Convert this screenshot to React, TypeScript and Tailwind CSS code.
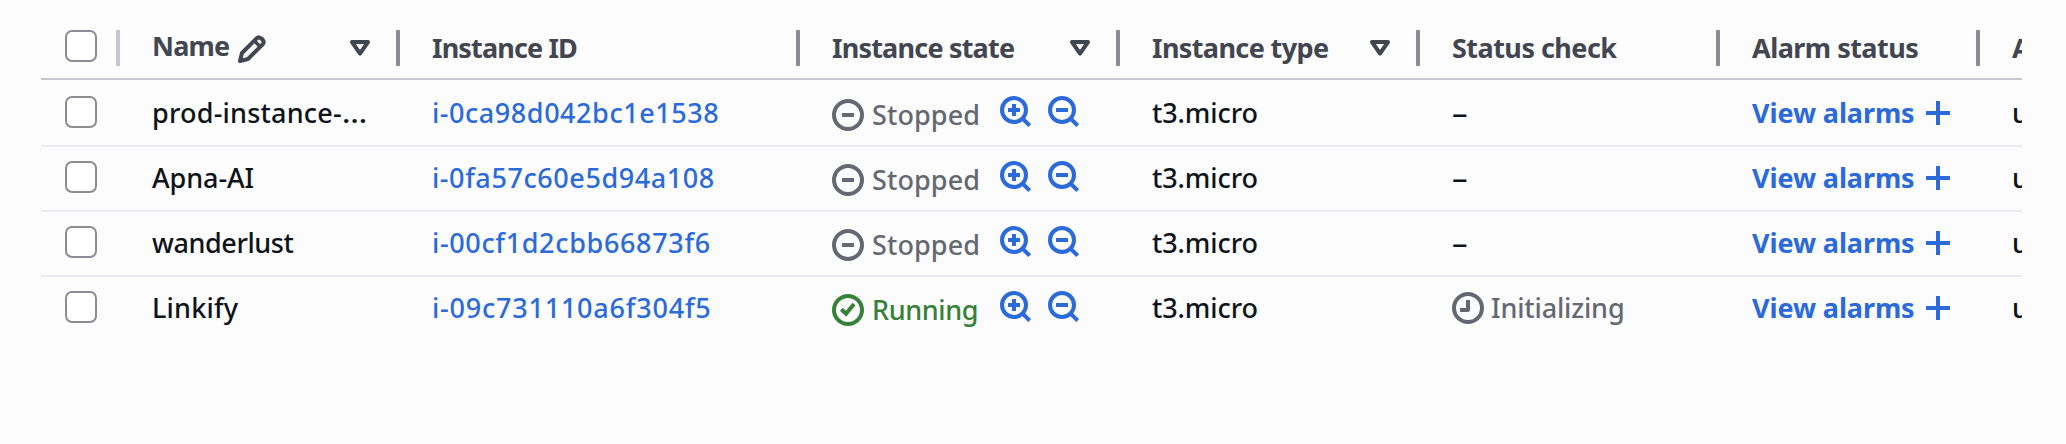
import type { ReactNode } from "react";

const GRID =
  "grid grid-cols-[79px_280px_400px_320px_300px_300px_260px_120px]";

function PencilIcon() {
  return (
    <svg className="mt-[3px] ml-[7px] h-8 w-8 shrink-0" viewBox="0 0 32 32" fill="none" stroke="#424650" strokeWidth="4" strokeLinejoin="round">
      <path d="M4 28 L6 20 L20.500 5.500 Q23 3 26 6 Q29 9 26.500 11.500 L12 26 Z" />
      <path d="M18.500 8 L24 13.500" strokeWidth="3.500" />
    </svg>
  );
}

function SortIcon() {
  return (
    <svg className="mt-8 h-8 w-8 shrink-0" viewBox="0 0 32 32" fill="none" stroke="#424650" strokeWidth="4" strokeLinejoin="round">
      <path d="M8 10 H24 L16 21.500 Z" />
    </svg>
  );
}

function StoppedIcon() {
  return (
    <svg className="h-8 w-8 shrink-0" viewBox="0 0 32 32" fill="none" stroke="currentColor" strokeWidth="4">
      <circle cx="16" cy="16" r="14" />
      <path d="M10 16 H22" />
    </svg>
  );
}

function RunningIcon() {
  return (
    <svg className="h-8 w-8 shrink-0" viewBox="0 0 32 32" fill="none" stroke="currentColor" strokeWidth="4">
      <circle cx="16" cy="16" r="14" />
      <path d="M9.300 15.300 L14 19.800 L22 10" />
    </svg>
  );
}

function PendingIcon() {
  return (
    <svg className="h-8 w-8 shrink-0" viewBox="0 0 32 32" fill="none" stroke="currentColor" strokeWidth="4" strokeLinejoin="round">
      <circle cx="16" cy="16" r="14" />
      <path d="M16 8 V18 H8" />
    </svg>
  );
}

function ZoomIcon({ plus }: { plus?: boolean }) {
  return (
    <svg className="h-8 w-8 shrink-0" viewBox="0 0 32 32" fill="none" stroke="#2b6adb" strokeWidth="4">
      <circle cx="14" cy="14" r="12" />
      <path d="M22.500 22.500 L29.700 29.700" />
      <path d={plus ? "M8 14 H20 M14 8 V20" : "M8 14 H20"} />
    </svg>
  );
}

function PlusIcon() {
  return (
    <svg className="mt-[15px] h-8 w-8 shrink-0" viewBox="0 0 32 32" fill="none" stroke="#2b6adb" strokeWidth="4">
      <path d="M4 16 H28 M16 4 V28" />
    </svg>
  );
}

function Checkbox() {
  return <span className="ml-6 block h-8 w-8 rounded-[7px] border-2 border-[#8c8c94] bg-white" />;
}

function HeaderCell({ children, sortable }: { children: ReactNode; sortable?: boolean }) {
  return (
    <div className="flex items-start pl-8">
      <div className="mt-[30px] flex flex-1 font-bold whitespace-nowrap text-[#424650]">{children}</div>
      {sortable && <SortIcon />}
      <span className={`mt-[30px] h-9 w-1 shrink-0 bg-[#8c8c94] ${sortable ? "ml-5" : ""}`} />
    </div>
  );
}

type Row = {
  name: ReactNode;
  id: ReactNode;
  running?: boolean;
};

const ROWS: Row[] = [
  {
    name: (
      <span className="tracking-[0.2px]">
        prod-instance-<span className="inline-block origin-left scale-x-115">…</span>
      </span>
    ),
    id: <span className="tracking-[0.55px]">i-0ca98d042bc1e1538</span>,
  },
  {
    name: <span className="tracking-[-0.1px]">Apna-AI</span>,
    id: <span className="tracking-[0.58px]">i-0fa57c60e5d94a108</span>,
  },
  {
    name: <span className="tracking-[-0.4px]">wanderlust</span>,
    id: <span className="tracking-[0.65px]">i-00cf1d2cbb66873f6</span>,
  },
  {
    name: <span className="tracking-[0.2px]">Linkify</span>,
    id: <span className="tracking-[0.78px]">i-09c731110a6f304f5</span>,
    running: true,
  },
];

function InstanceRow({ row, first, last }: { row: Row; first: boolean; last: boolean }) {
  return (
    <div
      className={`${GRID} ${first ? "h-[67px] pt-[2px]" : "h-[65px]"} ${last ? "" : "border-b-2 border-[#ebebf0]"} font-medium whitespace-nowrap text-[#0f141a]`}
    >
      <div className="pt-[14px]">
        <Checkbox />
      </div>
      <div className="pt-[13px] pl-8">{row.name}</div>
      <div className="pt-[13px] pl-8 text-[#2b6adb]">{row.id}</div>
      <div className="flex pl-8">
        <div className={`flex w-[168px] pt-[17px] ${row.running ? "text-[#378038]" : "text-[#656871]"}`}>
          {row.running ? <RunningIcon /> : <StoppedIcon />}
          <span className={`-mt-[2px] ml-2 ${row.running ? "tracking-[-0.4px]" : "tracking-[0.1px]"}`}>
            {row.running ? "Running" : "Stopped"}
          </span>
        </div>
        <div className="flex gap-4 pt-[14px]">
          <ZoomIcon plus />
          <ZoomIcon />
        </div>
      </div>
      <div className="pt-[13px] pl-8 tracking-[-0.1px]">t3.micro</div>
      <div className="flex pl-8">
        {row.running ? (
          <div className="flex pt-[15px] text-[#656871]">
            <PendingIcon />
            <span className="-mt-[2px] ml-[7px] tracking-[-0.15px]">Initializing</span>
          </div>
        ) : (
          <span className="origin-left scale-x-115 pt-[13px]">–</span>
        )}
      </div>
      <div className="flex pl-8 text-[#2b6adb]">
        <span className="w-[170px] pt-[13px] font-bold tracking-[-0.1px]">View alarms</span>
        <PlusIcon />
      </div>
      <div className="pt-[13px] pl-8">us-east-1a</div>
    </div>
  );
}

export default function App() {
  return (
    <div className="h-[444px] w-full overflow-hidden bg-[#fcfcfd] pl-[41px] font-['Noto_Sans',sans-serif] text-[27px] leading-[36px]">
      <div className="w-[1981px] overflow-hidden">
        <div className={`${GRID} h-20 border-b-2 border-[#c6c6cd]`}>
          <div className="flex justify-between pt-[30px]">
            <Checkbox />
            <span className="h-9 w-1 bg-[#c6c6cd]" />
          </div>
          <HeaderCell sortable>
            <span className="-mt-[2px] tracking-[-0.8px]">Name</span>
            <PencilIcon />
          </HeaderCell>
          <HeaderCell>
            <span className="tracking-[-0.85px]">Instance ID</span>
          </HeaderCell>
          <HeaderCell sortable>
            <span className="tracking-[-0.8px]">Instance state</span>
          </HeaderCell>
          <HeaderCell sortable>
            <span className="tracking-[-0.62px]">Instance type</span>
          </HeaderCell>
          <HeaderCell>
            <span className="tracking-[-0.53px]">Status check</span>
          </HeaderCell>
          <HeaderCell>
            <span className="tracking-[-0.53px]">Alarm status</span>
          </HeaderCell>
          <HeaderCell>Availability Zone</HeaderCell>
        </div>
        {ROWS.map((row, i) => (
          <InstanceRow key={i} row={row} first={i === 0} last={i === ROWS.length - 1} />
        ))}
      </div>
    </div>
  );
}
